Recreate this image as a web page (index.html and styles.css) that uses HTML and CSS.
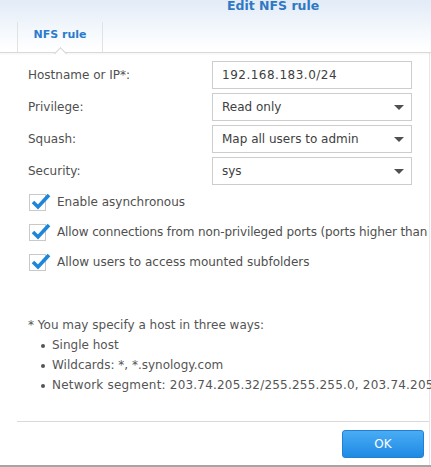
FILE: index.html
```html
<!DOCTYPE html>
<html>
<head>
<meta charset="utf-8">
<link rel="stylesheet" href="styles.css">
</head>
<body>
<div class="dialog">
  <div class="header">
    <div class="title">Edit NFS rule</div>
    <div class="tabs"><div class="tab">NFS rule</div></div>
  </div>
  <div class="main">
    <div class="content">
      <div class="form">
        <div class="label">Hostname or IP*:</div>
        <div class="field ip">192.168.183.0/24</div>
        <div class="label">Privilege:</div>
        <div class="field select">Read only<span class="arrow"></span></div>
        <div class="label">Squash:</div>
        <div class="field select">Map all users to admin<span class="arrow"></span></div>
        <div class="label">Security:</div>
        <div class="field select">sys<span class="arrow"></span></div>
      </div>
      <div class="checks">
        <div class="check"><span class="box"><svg class="tick" viewBox="0 0 24 24" width="24" height="24"><path d="M5 12 L10 17 L21 5" /></svg></span>Enable asynchronous</div>
        <div class="check"><span class="box"><svg class="tick" viewBox="0 0 24 24" width="24" height="24"><path d="M5 12 L10 17 L21 5" /></svg></span><span class="tight">Allow connections from non-privileged ports (ports higher than</span></div>
        <div class="check"><span class="box"><svg class="tick" viewBox="0 0 24 24" width="24" height="24"><path d="M5 12 L10 17 L21 5" /></svg></span>Allow users to access mounted subfolders</div>
      </div>
      <div class="note">
        <div>* You may specify a host in three ways:</div>
        <ul>
          <li>Single host</li>
          <li>Wildcards: *, *.synology.com</li>
          <li class="wide">Network segment: 203.74.205.32/255.255.255.0, 203.74.205</li>
        </ul>
      </div>
    </div>
    <div class="footer"><button class="ok">OK</button></div>
  </div>
</div>
</body>
</html>
```
FILE: styles.css
```css
* { box-sizing: border-box; }
html, body { margin: 0; padding: 0; }
body {
  width: 431px;
  height: 467px;
  overflow: hidden;
  background: #fff;
  font-family: "DejaVu Sans", Verdana, sans-serif;
  font-size: 12px;
  color: #4f4f4f;
}
.dialog {
  height: 467px;
  display: flex;
  flex-direction: column;
  border-bottom: 2px solid #a5a5a5;
}
.header {
  height: 53px;
  flex: none;
  background: linear-gradient(#e2ebf7, #f4f8fc 30px, #fff 50px);
  border-bottom: 1px solid #d9d9d9;
  box-shadow: 0 1px 2px rgba(0, 0, 0, 0.05);
  position: relative;
  z-index: 1;
}
.title {
  height: 22px;
  padding-left: 227px;
  font-weight: bold;
  font-size: 12.5px;
  line-height: 12px;
  color: #2f78c4;
  white-space: nowrap;
}
.tabs {
  height: 30px;
  padding-left: 17px;
  display: flex;
}
.tab {
  position: relative;
  width: 86px;
  padding-top: 6px;
  text-align: center;
  border-left: 1px solid #e2e2e2;
  border-right: 1px solid #e2e2e2;
  font-weight: bold;
  font-size: 11px;
  line-height: 13px;
  color: #2b7bcf;
}
.tab::after {
  content: "";
  position: absolute;
  left: 38px;
  top: 27px;
  width: 8px;
  height: 8px;
  background: #fff;
  border-left: 1px solid #d3d3d3;
  border-top: 1px solid #d3d3d3;
  transform: rotate(45deg);
}
.main {
  flex: 1;
  margin-left: 17px;
  width: 413px;
  border-right: 1px solid #e8e8e8;
  display: flex;
  flex-direction: column;
}
.content {
  flex: 1;
  padding: 8px 0 0 11px;
}
.form {
  display: grid;
  grid-template-columns: 184px 200px;
  row-gap: 4px;
}
.label {
  display: flex;
  align-items: center;
  white-space: nowrap;
}
.field {
  height: 28px;
  border: 1px solid #cdcdcd;
  padding: 0 9px;
  display: flex;
  align-items: center;
  color: #404040;
  white-space: nowrap;
}
.ip { letter-spacing: 0.5px; }
.select { padding-right: 7px; }
.arrow {
  margin-left: auto;
  width: 0;
  height: 0;
  border-left: 5px solid transparent;
  border-right: 5px solid transparent;
  border-top: 5px solid #505050;
}
.checks { margin-top: 2px; }
.check {
  height: 30px;
  display: flex;
  align-items: center;
  padding-left: 1px;
  white-space: nowrap;
}
.tight { letter-spacing: -0.12px; }
.box {
  position: relative;
  flex: none;
  width: 17px;
  height: 17px;
  border: 1px solid #c9c9c9;
  background: #fff;
  margin-right: 11px;
}
.tick {
  position: absolute;
  left: -2px;
  top: -5px;
  width: 24px;
  height: 24px;
  overflow: visible;
}
.tick path {
  fill: none;
  stroke: #1e86d9;
  stroke-width: 3.6;
  stroke-linecap: butt;
  stroke-linejoin: miter;
}
.note {
  margin-top: 38px;
  line-height: 20px;
  color: #555;
  white-space: nowrap;
}
.note ul {
  margin: 0;
  padding: 0;
  list-style: none;
}
.note li {
  position: relative;
  padding-left: 24px;
}
.note li.wide { letter-spacing: 0.2px; }
.note li::before {
  content: "";
  position: absolute;
  left: 13px;
  top: 9px;
  width: 4px;
  height: 4px;
  border-radius: 50%;
  background: #555;
}
.footer {
  flex: none;
  border-top: 1px solid #d9d9d9;
  padding: 8px 5px 7px 0;
  display: flex;
  justify-content: flex-end;
}
.ok {
  width: 82px;
  height: 28px;
  border: 1px solid #1f80d4;
  border-radius: 3px;
  background: linear-gradient(#49acf4, #1f8ae4);
  color: #fff;
  font-family: "DejaVu Sans", Verdana, sans-serif;
  font-size: 12px;
  padding: 0;
}
```
